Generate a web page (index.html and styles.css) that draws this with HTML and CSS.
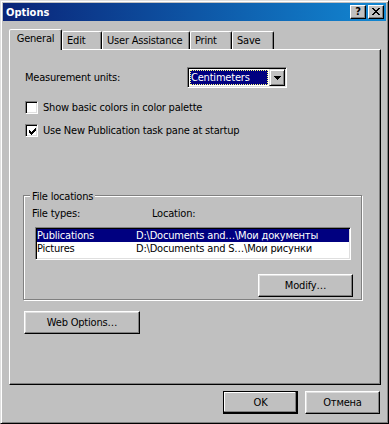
FILE: index.html
```html
<!DOCTYPE html>
<html lang="en">
<head>
<meta charset="UTF-8">
<meta name="viewport" content="width=device-width, initial-scale=1.0">
<title>Options</title>
<link rel="stylesheet" href="styles.css">
</head>

<body>
  <div class="window">
    <div class="titlebar">
      <span class="title">Options</span>
      <div class="caption-buttons">
        <span class="cap-btn help">?</span>
        <span class="cap-btn">
          <svg width="16" height="14" viewBox="0 0 16 14">
            <path d="M4 3h2v1H4z M10 3h2v1h-2z M5 4h2v1H5z M9 4h2v1H9z M6 5h4v1H6z M7 6h2v1H7z M6 7h4v1H6z M5 8h2v1H5z M9 8h2v1H9z M4 9h2v1H4z M10 9h2v1h-2z" fill="#000"/>
          </svg>
        </span>
      </div>
    </div>

    <div class="content">
      <!-- tab strip -->
      <div class="tabs">
        <div class="tab active">General</div>
        <div class="tab w-edit">Edit</div>
        <div class="tab w-assist">User Assistance</div>
        <div class="tab w-print">Print</div>
        <div class="tab w-save">Save</div>
      </div>

      <div class="panel">
        <div class="units-row">
          <span class="units-label">Measurement units:</span>
          <div class="combo">
            <span class="combo-value">Centimeters</span>
            <span class="combo-btn">
              <svg width="14" height="15" viewBox="0 0 14 15">
                <path d="M4 6h7v1H4z M5 7h5v1H5z M6 8h3v1H6z M7 9h1v1H7z" fill="#000"/>
              </svg>
            </span>
          </div>
        </div>

        <div class="check-row first">
          <span class="checkbox"></span>
          <span>Show basic colors in color palette</span>
        </div>
        <div class="check-row second">
          <span class="checkbox">
            <svg width="11" height="11" viewBox="1 1 11 11">
              <path d="M9 3h1v1H9z M8 4h2v1H8z M3 5h1v1H3z M7 5h3v1H7z M3 6h2v1H3z M6 6h3v1H6z M3 7h5v1H3z M4 8h3v1H4z M5 9h1v1H5z" fill="#000"/>
            </svg>
          </span>
          <span>Use New Publication task pane at startup</span>
        </div>

        <!-- file locations group -->
        <div class="group">
          <span class="group-title">File locations</span>
          <div class="cols">
            <span class="col-type">File types:</span>
            <span>Location:</span>
          </div>
          <div class="listbox">
            <div class="list-row selected">
              <span class="cell-type">Publications</span>
              <span>D:\Documents and…\Мои документы</span>
            </div>
            <div class="list-row">
              <span class="cell-type">Pictures</span>
              <span>D:\Documents and S…\Мои рисунки</span>
            </div>
          </div>
          <div class="modify-row">
            <button class="btn modify">Modify…</button>
          </div>
        </div>

        <button class="btn web">Web Options…</button>
      </div>

      <div class="footer">
        <button class="btn default">OK</button>
        <button class="btn">Отмена</button>
      </div>
    </div>
  </div>
</body>
</html>
```

FILE: styles.css
```css
* {
  box-sizing: border-box;
}

body {
  margin: 0;
  background: #c0c0c0;
  font-family: "DejaVu Sans Condensed", "DejaVu Sans", sans-serif;
  font-stretch: condensed;
  font-size: 11px;
  line-height: 13px;
  letter-spacing: -0.2px;
  color: #000;
}

.window {
  width: 389px;
  height: 424px;
  padding: 2px;
  border: 1px solid;
  border-color: #dfdfdf #000 #000 #dfdfdf;
  box-shadow: inset 1px 1px 0 #fff, inset -1px -1px 0 #808080;
  background: #c0c0c0;
  display: flex;
  flex-direction: column;
}

/* title bar */
.titlebar {
  height: 18px;
  display: flex;
  align-items: center;
  justify-content: space-between;
  padding: 0 2px 0 3px;
  background: linear-gradient(90deg, #0a2478, #1287d2);
}
.title {
  color: #fff;
  font-weight: bold;
  letter-spacing: 0;
}
.caption-buttons {
  display: flex;
  gap: 2px;
}
.cap-btn {
  width: 16px;
  height: 14px;
  display: flex;
  align-items: center;
  justify-content: center;
  background: #c0c0c0;
  border: 1px solid;
  border-color: #fff #000 #000 #fff;
  box-shadow: inset -1px -1px 0 #808080;
}
.cap-btn svg {
  margin: -1px;
}
.help {
  font-weight: bold;
  line-height: 12px;
}

.content {
  flex: 1;
  padding: 8px 5px 0 6px;
}

/* tabs */
.tabs {
  display: flex;
  align-items: flex-end;
  height: 20px;
}
.tab {
  height: 18px;
  padding: 2px 0 0 4px;
  border: 1px solid;
  border-bottom: 0;
  border-color: #fff #000 transparent #fff;
  border-radius: 2px 2px 0 0;
  box-shadow: inset -1px 0 0 #808080;
  white-space: nowrap;
}
.tab.active {
  width: 53px;
  height: 21px;
  margin-bottom: -1px;
  padding-left: 0;
  text-align: center;
  position: relative;
  z-index: 1;
  background: #c0c0c0;
}
.w-edit { width: 40px; }
.w-assist { width: 88px; }
.w-print { width: 42px; }
.w-save { width: 42px; }

.panel {
  height: 336px;
  border: 1px solid;
  border-color: #fff #000 #000 #fff;
  box-shadow: inset -1px -1px 0 #808080;
  display: flex;
  flex-direction: column;
  align-items: flex-start;
}

/* measurement units */
.units-row {
  display: flex;
  align-items: center;
  height: 21px;
  margin-top: 17px;
  padding-left: 15px;
}
.units-label {
  width: 162px;
}
.combo {
  width: 100px;
  height: 21px;
  display: flex;
  padding: 1px;
  border: 1px solid;
  border-color: #808080 #fff #fff #808080;
  box-shadow: inset 1px 1px 0 #000, inset -1px -1px 0 #dfdfdf;
  background: #fff;
}
.combo-value {
  flex: 1;
  margin: 1px;
  padding-left: 1px;
  line-height: 15px;
  color: #fff;
  background: #000080;
  outline: 1px dotted #ffff80;
  outline-offset: -1px;
}
.combo-btn {
  width: 16px;
  height: 17px;
  background: #c0c0c0;
  border: 1px solid;
  border-color: #dfdfdf #000 #000 #dfdfdf;
  box-shadow: inset 1px 1px 0 #fff, inset -1px -1px 0 #808080;
}
.combo-btn svg {
  display: block;
}

/* checkboxes */
.check-row {
  display: flex;
  align-items: center;
  gap: 5px;
  height: 13px;
  margin-left: 15px;
  white-space: nowrap;
}
.check-row.first { margin-top: 13px; }
.check-row.second { margin-top: 10px; }
.checkbox {
  width: 13px;
  height: 13px;
  padding: 1px;
  border: 1px solid;
  border-color: #808080 #fff #fff #808080;
  box-shadow: inset 1px 1px 0 #000, inset -1px -1px 0 #dfdfdf;
  background: #fff;
}
.checkbox svg {
  display: block;
}

/* group box */
.group {
  width: 339px;
  height: 105px;
  margin: 58px 0 0 13px;
  border: 1px solid #808080;
  box-shadow: inset 1px 1px 0 #fff, 1px 1px 0 #fff;
  display: flex;
  flex-direction: column;
}
.group-title {
  align-self: flex-start;
  margin: -6px 0 0 6px;
  padding: 0 2px;
  background: #c0c0c0;
}
.cols {
  display: flex;
  margin-top: 4px;
  padding-left: 8px;
}
.col-type {
  width: 120px;
}
.listbox {
  width: 316px;
  height: 33px;
  margin: 7px 0 0 11px;
  padding: 1px;
  border: 1px solid;
  border-color: #808080 #fff #fff #808080;
  box-shadow: inset 1px 1px 0 #000, inset -1px -1px 0 #dfdfdf;
  background: #fff;
}
.list-row {
  display: flex;
  height: 13px;
  white-space: nowrap;
}
.list-row.selected {
  background: #000080;
  color: #fff;
}
.cell-type {
  width: 99px;
}
.modify-row {
  display: flex;
  justify-content: flex-end;
  margin-top: 14px;
  padding-right: 8px;
}

/* buttons */
.btn {
  height: 23px;
  padding: 0;
  font: inherit;
  line-height: 13px;
  letter-spacing: inherit;
  color: #000;
  background: #c0c0c0;
  border: 1px solid;
  border-color: #fff #000 #000 #fff;
  box-shadow: inset -1px -1px 0 #808080, inset 1px 1px 0 #dfdfdf;
}
.btn.default {
  border-color: #000;
  box-shadow: inset -1px -1px 0 #000, inset -2px -2px 0 #808080, inset 1px 1px 0 #fff;
}
.modify {
  width: 95px;
}
.web {
  width: 116px;
  margin: 11px 0 0 14px;
}

.footer {
  display: flex;
  justify-content: flex-end;
  gap: 7px;
  margin-top: 6px;
  padding-right: 1px;
}
.footer .btn {
  width: 75px;
}
```
